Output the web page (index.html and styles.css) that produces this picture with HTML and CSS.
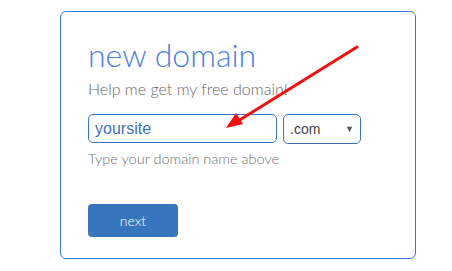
FILE: index.html
```html
<!DOCTYPE html>
<html>
<head>
<link rel="stylesheet" href="styles.css">
	<title>New Domain</title>
	<meta name="viewport" content="width=device-width, initial-scale=1">
</head>
<body>
	<div class="panelDomain">
		<h1 class="title">new domain</h1>
		<p class="subtitle">Help me get my free domain!</p>

		<div class="rowDomain">
			<input type="text" class="inputDomain" value="yoursite">
			<div class="selectTld">
				<span>.com</span>
				<span class="caret">&#9660;</span>
			</div>
		</div>
		<p class="hint">Type your domain name above</p>

		<button class="buttonNext">next</button>
	</div>

	<svg class="arrow" width="452" height="271" viewBox="0 0 452 271">
		<line x1="357" y1="47" x2="238" y2="121" stroke="#f01010" stroke-width="3" stroke-linecap="round"/>
		<polygon points="226,128 236,113 243,124" fill="#f01010"/>
	</svg>
</body>
</html>
```

FILE: styles.css
```css
* {
	box-sizing: border-box;
}

body {
	margin: 0;
	background: #fff;
	font-family: Lato, "Open Sans", sans-serif;
}

.panelDomain {
	width: 356px;
	height: 248px;
	margin: 11px 0 0 60px;
	padding: 26px 0 0 27px;
	border: 1px solid #3c7ad6;
	border-radius: 6px;
}

.title {
	margin: 0;
	font-size: 32px;
	font-weight: 300;
	line-height: 34px;
	color: #4d7fe0;
}

.subtitle {
	margin: 7px 0 0;
	font-size: 16px;
	font-weight: 300;
	line-height: 20px;
	color: #666;
}

.rowDomain {
	display: flex;
	gap: 6px;
	margin-top: 15px;
}

.inputDomain {
	width: 189px;
	height: 29px;
	padding: 0 6px;
	border: 1px solid #3a73b8;
	border-radius: 5px;
	font-family: "Liberation Sans", Arial, sans-serif;
	font-size: 16px;
	color: #3d70b6;
	outline: none;
}

.selectTld {
	display: flex;
	align-items: center;
	justify-content: space-between;
	width: 78px;
	height: 30px;
	padding: 0 6px 0 6px;
	border: 1px solid #3a73b8;
	border-radius: 5px;
	font-family: "Liberation Sans", Arial, sans-serif;
	font-size: 14px;
	color: #444;
}

.caret {
	font-size: 9px;
	color: #555;
}

.hint {
	margin: 6px 0 0;
	font-size: 14.5px;
	font-weight: 300;
	line-height: 18px;
	color: #6f6f6f;
}

.buttonNext {
	display: block;
	width: 90px;
	height: 33px;
	margin-top: 36px;
	border: none;
	border-radius: 4px;
	background: #3776bc;
	color: #fff;
	font-family: Lato, sans-serif;
	font-size: 14px;
	font-weight: 300;
}

.arrow {
	position: absolute;
	left: 0;
	top: 0;
	pointer-events: none;
}
```
